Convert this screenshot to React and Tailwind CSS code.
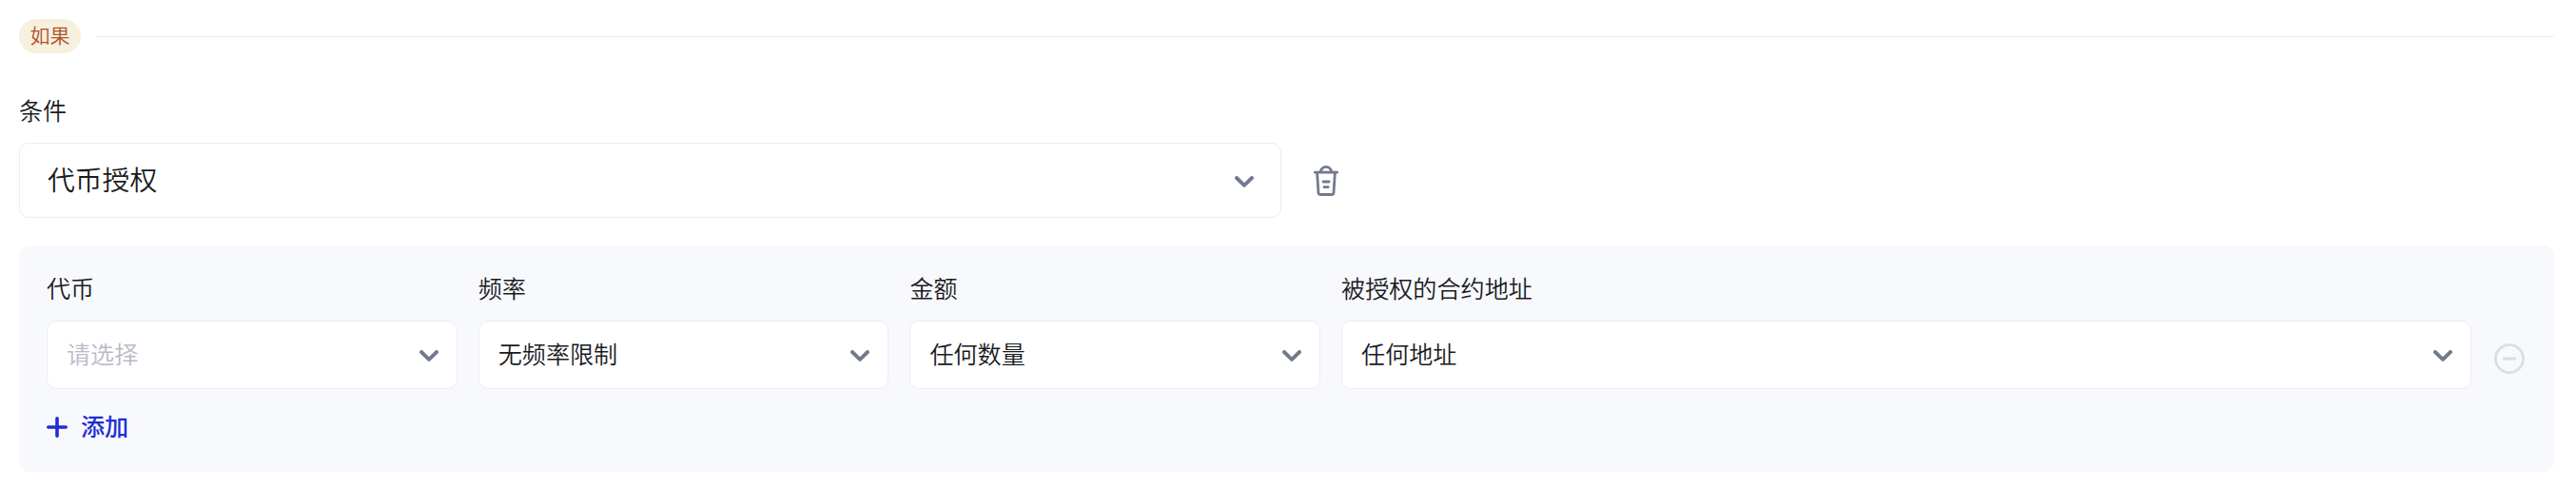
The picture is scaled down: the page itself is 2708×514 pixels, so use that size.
function Chevron() {
  return (
    <svg className="h-3 w-5 shrink-0" viewBox="0 0 20 12" fill="none" stroke="#747a8e" strokeWidth="3.9" strokeLinecap="round" strokeLinejoin="round">
      <path d="M2 2 L10 9.8 L18 2" />
    </svg>
  );
}

function TrashIcon() {
  return (
    <svg className="h-8 w-[26px] shrink-0" viewBox="0 0 26 32" fill="none" stroke="#747a8e" strokeWidth="2.8" strokeLinecap="round" strokeLinejoin="round">
      <path d="M1.4 7.2 H24.6" />
      <path d="M7.2 6.8 C8 3 10 1.4 13 1.4 C16 1.4 18 3 18.8 6.8" />
      <path d="M3.6 7.5 L5 28.6 Q5.2 30.5 7.2 30.5 H18.8 Q20.8 30.5 21 28.6 L22.4 7.5" />
      <path d="M10 17 H16.2" />
      <path d="M11 22.7 H15.2" />
    </svg>
  );
}

function Field({ label, value, placeholder }) {
  return (
    <div className="min-w-0">
      <div className="h-[37px] text-[25.1px] leading-[33px]">{label}</div>
      <div className="mt-[14px] flex h-[72px] items-center justify-between rounded-[10px] border border-[#ececf2] bg-white pr-[19px] pl-5">
        {value ? (
          <span className="pb-[4px] text-[25.1px] leading-[36px]">{value}</span>
        ) : (
          <span className="pb-[4px] text-[25.1px] leading-[36px] text-[#b9bbc6]">{placeholder}</span>
        )}
        <span className="pt-[2px]"><Chevron /></span>
      </div>
    </div>
  );
}

export default function App() {
  return (
    <div className="h-[514px] w-[2708px] overflow-hidden bg-white pt-5 pr-[23px] pl-5 font-['Noto_Sans_CJK_SC',sans-serif] font-[350] text-[#191b1e]">
      <div className="flex h-9 items-center gap-[15px]">
        <span className="flex h-9 w-[65px] items-center justify-center rounded-full bg-[#f8f0de] pb-[5px] text-[21px] leading-[30px] text-[#ab5427]">如果</span>
        <div className="mt-px h-px flex-1 bg-[#ececf4]" />
      </div>

      <div className="mt-[42px] h-[37px] text-[25.1px] leading-[35px]">条件</div>
      <div className="mt-[15px] flex items-center gap-[34px]">
        <div className="flex h-[79px] w-[1327px] items-center justify-between rounded-[10px] border border-[#ececf2] bg-white pr-7 pl-[29px]">
          <span className="pb-[3px] text-[28.8px] leading-[42px]">代币授权</span>
          <span className="pt-[2px]"><Chevron /></span>
        </div>
        <button type="button" aria-label="删除"><TrashIcon /></button>
      </div>

      <div className="mt-[29px] h-[238px] rounded-[10px] bg-[#f8f9fd] pt-7 pr-[31px] pl-[29px]">
        <div className="flex items-start gap-6">
          <div className="grid flex-1 grid-cols-[431.7px_431.7px_431.7px_1fr] gap-x-[22px]">
            <Field label="代币" placeholder="请选择" />
            <Field label="频率" value="无频率限制" />
            <Field label="金额" value="任何数量" />
            <Field label="被授权的合约地址" value="任何地址" />
          </div>
          <button type="button" aria-label="移除" className="mt-[75px]">
            <svg className="size-8" viewBox="0 0 32 32" fill="none" stroke="#dcdde1" strokeWidth="2.8" strokeLinecap="round">
              <circle cx="16" cy="16" r="14.6" />
              <path d="M10 16 H22" />
            </svg>
          </button>
        </div>
        <button type="button" className="mt-5 flex h-10 items-center gap-[14px] text-[25.1px] leading-[37px] font-medium text-[#202ed2]">
          <svg className="size-[22px]" viewBox="0 0 22 22" fill="none" stroke="currentColor" strokeWidth="3.6" strokeLinecap="round">
            <path d="M11 1.8 V20.2 M1.8 11 H20.2" />
          </svg>
          <span className="pb-[4px]">添加</span>
        </button>
      </div>
    </div>
  );
}
